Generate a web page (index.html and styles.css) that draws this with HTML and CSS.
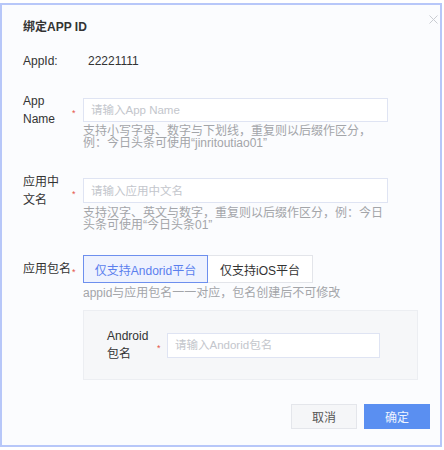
FILE: index.html
```html
<!doctype html>
<html lang="zh-CN">
<head>
  <meta charset="utf-8">
  <meta name="viewport" content="width=device-width,initial-scale=1">
  <title>绑定APP ID</title>
  <link rel="stylesheet" href="styles.css">
</head>
<body>
  <div class="dialog" role="dialog">
    <h2 class="title">绑定APP ID</h2>
    <span class="close" aria-label="关闭">
      <svg width="9" height="9" viewBox="0 0 9 9"><path d="M0.5 0.5L8.5 8.5M8.5 0.5L0.5 8.5" stroke="#c9ccd2" stroke-width="1" fill="none"/></svg>
    </span>

    <div class="info">
      <span class="info-label">AppId:</span>
      <span class="info-value">22221111</span>
    </div>

    <div class="field f-name">
      <label class="label">App Name</label>
      <span class="star">*</span>
      <input class="input" placeholder="请输入App Name">
      <div class="help">支持小写字母、数字与下划线，重复则以后缀作区分，例：今日头条可使用“jinritoutiao01”</div>
    </div>

    <div class="field f-cn">
      <label class="label">应用中文名</label>
      <span class="star">*</span>
      <input class="input tall" placeholder="请输入应用中文名">
      <div class="help">支持汉字、英文与数字，重复则以后缀作区分，例：今日头条可使用“今日头条01”</div>
    </div>

    <div class="field f-pkg">
      <label class="label nowrap">应用包名</label>
      <span class="star">*</span>
      <div class="switch">
        <button class="opt on">仅支持Andorid平台</button>
        <button class="opt ios">仅支持iOS平台</button>
      </div>
      <div class="help">appid与应用包名一一对应，包名创建后不可修改</div>
    </div>

    <div class="sub">
      <label class="sub-label">Android 包名</label>
      <span class="star">*</span>
      <input class="input sub-input" placeholder="请输入Andorid包名">
    </div>

    <div class="actions">
      <button class="btn">取消</button>
      <button class="btn primary">确定</button>
    </div>
  </div>
</body>
</html>
```

FILE: styles.css
```css
:root{
  --text:#333;
  --muted:#a3a5a9;
  --holder:#c3c6cc;
  --line:#dfe4f3;
  --blue:#5a8ff1;
}
*{box-sizing:border-box}
body{margin:0;background:#fff;color:var(--text);font-family:"Liberation Sans","Noto Sans CJK SC",sans-serif;font-size:12px}

.dialog{position:relative;width:442px;height:444px;margin-top:3px;border:2px solid #b7c7f9;background:#fbfcfe;padding:12px 10px 0 21px}
.title{margin:0;font-size:12px;line-height:20px;font-weight:bold;color:#333}
.close{position:absolute;top:10px;right:2px;width:9px;height:9px;display:flex}

.info{margin-top:14px;display:flex;line-height:20px}
.info-label{width:65px}

/* form rows: label | star | control, help under control */
.field{display:grid;grid-template-columns:45px 15px 305px;align-items:center}
.f-name{margin-top:27px}
.f-cn{margin-top:29px}
.f-pkg{margin-top:24px}
/* two-line labels hang over the row so the input sets its height */
.label{line-height:18px;font-size:12px;margin:-8px 0}
.label.nowrap{white-space:nowrap;margin:0}
.star{color:#e5534b;font-size:9px;padding-left:4px;line-height:10px;transform:translateY(3px)}
.help{grid-column:3;margin-top:3px;line-height:12px;color:var(--muted);font-size:12px}
.f-cn .help,.f-pkg .help{margin-top:4px}

.input{height:24px;width:100%;border:1px solid var(--line);background:#fff;padding:0 7px;font:inherit;font-size:11.5px;color:var(--text);outline:none}
.input.tall{height:25px}
.input::placeholder{color:var(--holder)}

.switch{display:flex}
.opt{height:28px;border:1px solid #e3e5ea;background:#fff;font:inherit;font-size:12px;color:#333;padding:0;cursor:pointer}
.opt.on{width:125px;border-color:#6d8fee;background:#eef2fe;color:#5b7fee}
.opt.ios{width:105px;border-left:none}

.sub{margin:11px 0 0 60px;width:335px;height:70px;background:#f6f7f9;border:1px solid #eceef2;padding:0 37px 0 23px;display:flex;align-items:center}
.sub-label{width:47px;line-height:18px}
.sub .star{width:13px;padding-left:3px}
.sub-input{flex:1;height:25px}

.actions{margin-top:24px;display:flex;justify-content:flex-end;gap:7px}
.btn{width:66px;height:25px;border:1px solid #e4e6eb;background:#f5f6f8;font:inherit;font-size:12px;color:#555;cursor:pointer}
.btn.primary{background:var(--blue);border-color:var(--blue);color:#eef4ff}
```
